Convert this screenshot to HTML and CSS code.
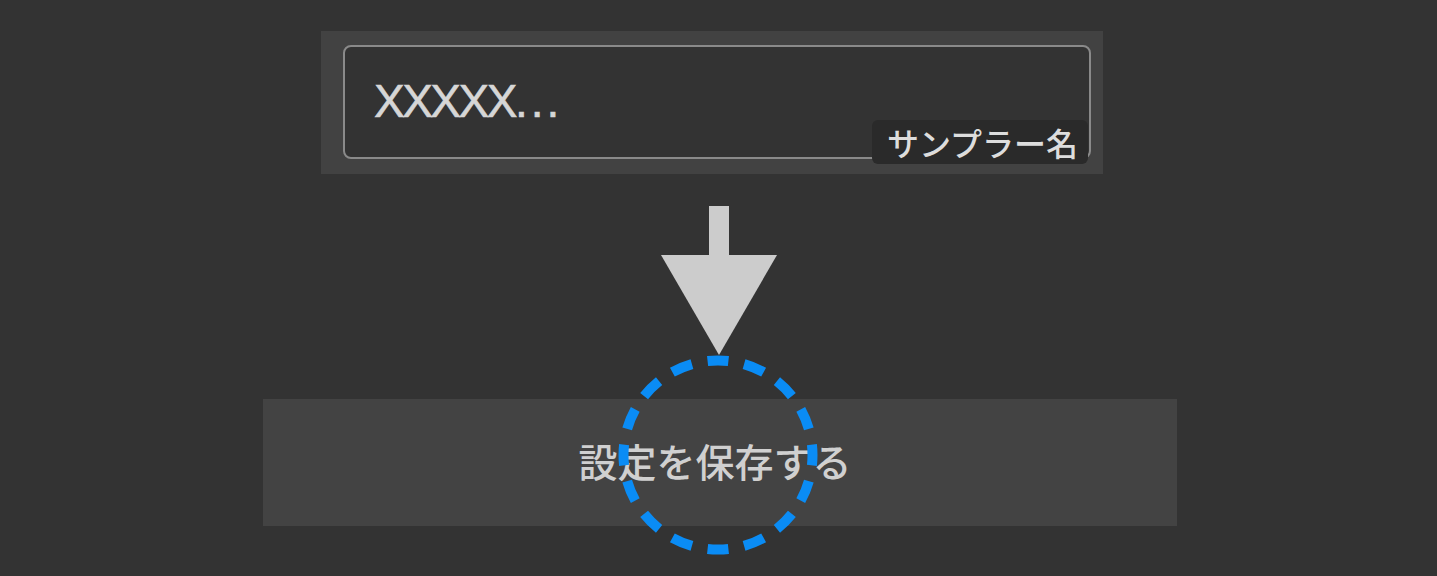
FILE: index.html
```html
<!DOCTYPE html>
<html lang="ja">
<head>
<meta charset="utf-8">
<title>サンプラー名</title>
<link rel="stylesheet" href="styles.css">
</head>
<body>
<main class="stage">
  <section class="panel">
    <div class="field">
      <span class="value">XXXXX<span class="dots">...</span></span>
      <span class="tag">サンプラー名</span>
    </div>
  </section>
  <div class="arrow">
    <svg width="116" height="149" viewBox="0 0 116 149" aria-hidden="true">
      <rect x="48" y="0" width="20" height="50" fill="#cccccc"/>
      <polygon points="0,49 116,49 58,149" fill="#cccccc"/>
    </svg>
  </div>
  <div class="save-wrap">
    <button class="save" type="button">設定を保存する</button>
    <svg class="ring" width="200" height="200" viewBox="0 0 200 200" aria-hidden="true">
      <circle cx="100" cy="100" r="94.5" fill="none" stroke="#0a8cf5" stroke-width="10" pathLength="160" stroke-dasharray="5.7 4.3" stroke-dashoffset="2.85"/>
    </svg>
  </div>
</main>
</body>
</html>
```
FILE: styles.css
```css
html, body {
  margin: 0;
  padding: 0;
  background: #333333;
}
body {
  width: 1437px;
  height: 576px;
  overflow: hidden;
  font-family: "Noto Sans CJK JP", "Noto Sans", sans-serif;
}
.stage {
  display: flex;
  flex-direction: column;
  padding-top: 31px;
}
.panel {
  margin-left: 321px;
  width: 782px;
  box-sizing: border-box;
  background: #424242;
  padding: 14px 12px 15px 22px;
}
.field {
  position: relative;
  box-sizing: border-box;
  height: 114px;
  border: 2px solid #8a8a8a;
  border-radius: 8px;
  background: #333333;
  display: flex;
  align-items: center;
  padding-left: 29px;
}
.value {
  font-family: "Liberation Sans", Arial, sans-serif;
  font-size: 46px;
  color: #d6d6d6;
  letter-spacing: -2.5px;
  margin-top: -2px;
  -webkit-text-stroke: 0.6px #d6d6d6;
}
.dots {
  letter-spacing: 3px;
}
.tag {
  position: absolute;
  right: 1px;
  bottom: -7px;
  height: 44px;
  line-height: 44px;
  padding: 0 10px 0 15px;
  border-radius: 6px;
  background: #2a2a2a;
  color: #dddddd;
  font-size: 32px;
  font-weight: 500;
  font-family: "Noto Sans CJK JP", sans-serif;
}
.arrow {
  margin-top: 32px;
  margin-left: 661px;
  height: 149px;
  display: flex;
}
.save-wrap {
  position: relative;
  margin-top: 44px;
  margin-left: 263px;
  width: 914px;
}
.save {
  display: block;
  width: 914px;
  height: 127px;
  border: none;
  margin: 0;
  padding: 0 10px 4px 0;
  background: #434343;
  color: #d0d0d0;
  font-family: "Noto Sans CJK JP", sans-serif;
  font-size: 39px;
  font-weight: 500;
  line-height: 123px;
}
.ring {
  position: absolute;
  left: 355px;
  top: -44px;
}
```
